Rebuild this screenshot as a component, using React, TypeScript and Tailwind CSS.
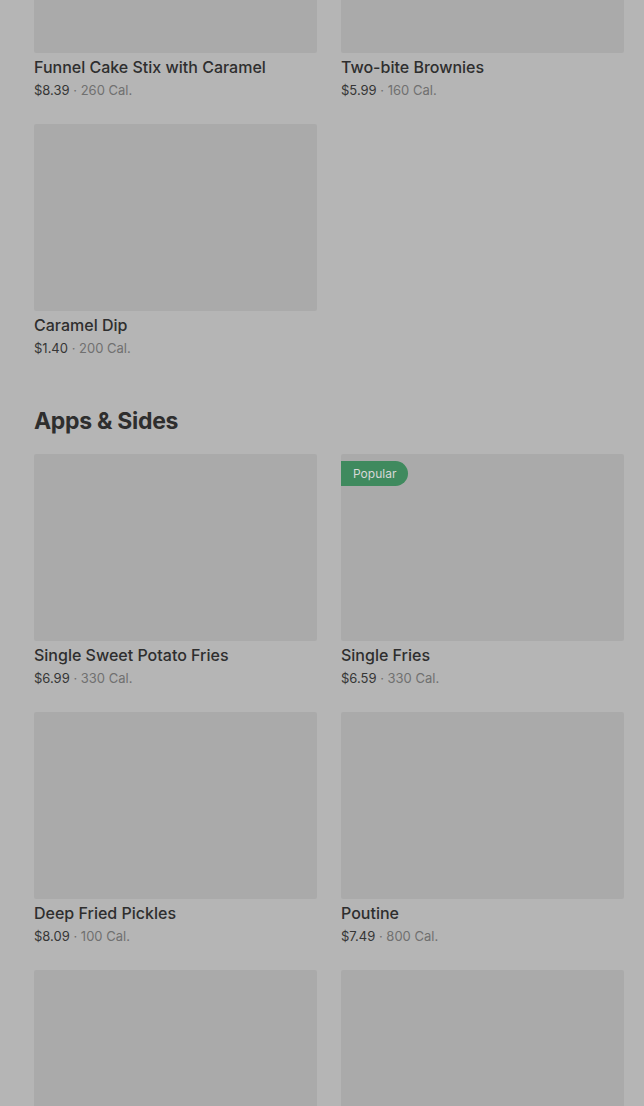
import React from 'react';

interface Item {
  name: string;
  price: string;
  cal: string;
  popular?: boolean;
}

const desserts: Item[] = [
  { name: 'Funnel Cake Stix with Caramel', price: '$8.39', cal: '260 Cal.' },
  { name: 'Two-bite Brownies', price: '$5.99', cal: '160 Cal.' },
  { name: 'Caramel Dip', price: '$1.40', cal: '200 Cal.' },
];

const sides: Item[] = [
  { name: 'Single Sweet Potato Fries', price: '$6.99', cal: '330 Cal.' },
  { name: 'Single Fries', price: '$6.59', cal: '330 Cal.', popular: true },
  { name: 'Deep Fried Pickles', price: '$8.09', cal: '100 Cal.' },
  { name: 'Poutine', price: '$7.49', cal: '800 Cal.' },
  { name: 'Mozzarella Sticks', price: '$7.99', cal: '420 Cal.' },
  { name: 'Onion Rings', price: '$6.79', cal: '480 Cal.' },
];

function MenuCard({ item }: { item: Item }) {
  return (
    <div className="flex flex-col">
      <div className="relative h-[187px] rounded-[2px] bg-[#aaaaaa]">
        {item.popular && (
          <span className="absolute left-0 top-[7px] flex h-[25px] items-center rounded-r-full bg-[#3f8a5e] pl-3 pr-3 text-[12px] text-[#d8d8d8]">
            Popular
          </span>
        )}
      </div>
      <div className="mt-[2px] text-[16px] font-medium leading-6 text-[#2e2e2e]">{item.name}</div>
      <div className="mt-[1px] text-[13px] leading-5">
        <span className="text-[#363636]">{item.price}</span>
        <span className="text-[#707070]"> · {item.cal}</span>
      </div>
    </div>
  );
}

export default function App() {
  return (
    <div
      className="h-[1106px] overflow-hidden bg-[#b5b5b5] pl-[34px] pr-[20px]"
      style={{ fontFamily: 'Inter, "Noto Sans", sans-serif' }}
    >
      <div className="-mt-[134px] grid grid-cols-2 gap-x-6 gap-y-6">
        {desserts.map((d) => (
          <MenuCard key={d.name} item={d} />
        ))}
      </div>
      <h2 className="mb-[17px] mt-[47px] text-[23px] font-bold leading-8 tracking-[-0.3px] text-[#2e2e2e]">
        Apps &amp; Sides
      </h2>
      <div className="grid grid-cols-2 gap-x-6 gap-y-6">
        {sides.map((d) => (
          <MenuCard key={d.name} item={d} />
        ))}
      </div>
    </div>
  );
}
